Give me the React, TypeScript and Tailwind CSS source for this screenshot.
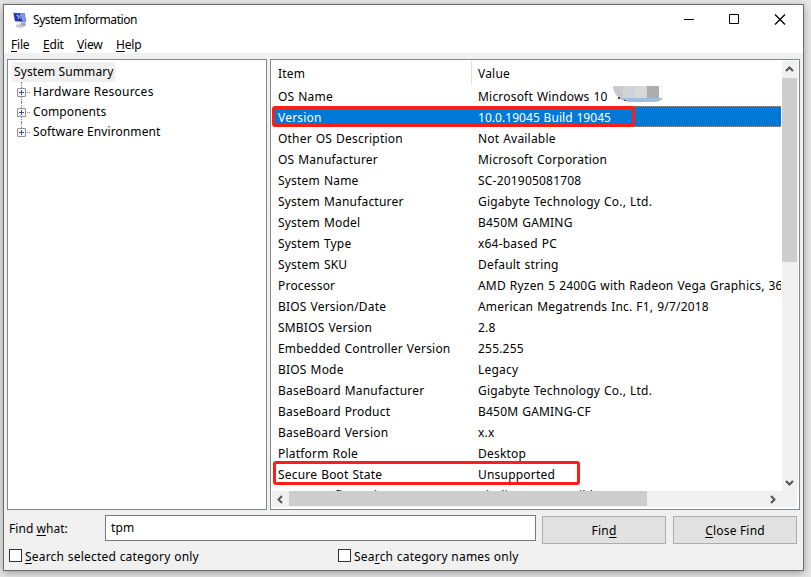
import { useState } from 'react'
import type { ReactNode } from 'react'

const rows: [string, string][] = [
  ['OS Name', 'Microsoft Windows 10'],
  ['Version', '10.0.19045 Build 19045'],
  ['Other OS Description', 'Not Available'],
  ['OS Manufacturer', 'Microsoft Corporation'],
  ['System Name', 'SC-201905081708'],
  ['System Manufacturer', 'Gigabyte Technology Co., Ltd.'],
  ['System Model', 'B450M GAMING'],
  ['System Type', 'x64-based PC'],
  ['System SKU', 'Default string'],
  ['Processor', 'AMD Ryzen 5 2400G with Radeon Vega Graphics, 36'],
  ['BIOS Version/Date', 'American Megatrends Inc. F1, 9/7/2018'],
  ['SMBIOS Version', '2.8'],
  ['Embedded Controller Version', '255.255'],
  ['BIOS Mode', 'Legacy'],
  ['BaseBoard Manufacturer', 'Gigabyte Technology Co., Ltd.'],
  ['BaseBoard Product', 'B450M GAMING-CF'],
  ['BaseBoard Version', 'x.x'],
  ['Platform Role', 'Desktop'],
  ['Secure Boot State', 'Unsupported'],
  ['PCR7 Configuration', 'Binding Not Possible'],
]

const categories = ['Hardware Resources', 'Components', 'Software Environment']

function Key({ children }: { children: ReactNode }) {
  return <span className="underline decoration-1 underline-offset-2">{children}</span>
}

function AppIcon() {
  return (
    <svg width="16" height="16" viewBox="0 0 16 16">
      <path d="M3 13l5-2 4 1 1 2-5 2-5-1z" fill="#c9ccd1" />
      <path d="M8 11l4-1 1 3-4 1z" fill="#9aa1ab" />
      <path d="M0 .5l12 .5 1.500 10L2 10z" fill="#c3cbe0" />
      <path d="M.5 1l11 .5L13 10 2 9z" fill="#2038b4" />
      <path d="M7 1.300l4.500.2L13 10 9.500 9.700z" fill="#7f97e4" />
      <path d="M3.500 3.500l1.500-.5.500 4M7.500 3l-1 2 2 1.500" stroke="#b9c8f6" fill="none" />
    </svg>
  )
}

function Chevron({ d }: { d: string }) {
  return (
    <svg width="9" height="9" viewBox="0 0 9 9" fill="none" stroke="#555" strokeWidth="2">
      <path d={d} />
    </svg>
  )
}

function TitleBar() {
  return (
    <div className="flex h-[29px] items-center bg-white pl-[9px]">
      <AppIcon />
      <span className="ml-1 flex-1 text-[12px] tracking-[-0.43px]">System Information</span>
      <svg width="130" height="11" viewBox="0 0 130 11" className="mr-[-11px]" fill="none" stroke="#000">
        <path d="M0 5.500h10M45.500 .5h9v9h-9z" />
        <path d="M91 .5l10 10M101 .5l-10 10" strokeWidth="1.300" />
      </svg>
    </div>
  )
}

function MenuBar() {
  return (
    <div className="flex h-[19px] items-center bg-white pt-[3px] pl-[7px] text-[12px] tracking-[-0.2px]">
      <span className="w-8"><Key>F</Key>ile</span>
      <span className="w-[34px]"><Key>E</Key>dit</span>
      <span className="w-[39px]"><Key>V</Key>iew</span>
      <span><Key>H</Key>elp</span>
    </div>
  )
}

function Tree() {
  return (
    <div className="w-[260px] border border-[#828790] bg-white pt-[2px] pl-1 tracking-[0.1px]">
      <div className="h-5 w-[103px] bg-[#f0f0f0] pl-[2px] leading-5">System Summary</div>
      {categories.map((name, i) => (
        <div key={name} className="relative flex h-5 items-center pl-[5px]">
          <span className="absolute top-0 left-[9px] h-[6px] border-l border-dotted border-[#808080]" />
          {i < categories.length - 1 && (
            <span className="absolute bottom-0 left-[9px] h-[5px] border-l border-dotted border-[#808080]" />
          )}
          <svg width="9" height="9" viewBox="0 0 9 9" fill="none">
            <rect x=".5" y=".5" width="8" height="8" rx=".5" fill="#f6f6f6" stroke="#919191" />
            <path d="M2 4.500h5M4.500 2v5" stroke="#3c5096" />
          </svg>
          <span className="ml-px w-[3px] border-t border-dotted border-[#808080]" />
          <span className={i === 0 ? 'ml-[3px] tracking-[0.25px]' : 'ml-[3px]'}>{name}</span>
        </div>
      ))}
    </div>
  )
}

function Details() {
  return (
    <div className="relative ml-[3px] flex w-[530px] flex-col border border-[#828790] bg-white p-px pb-[2px] [word-spacing:0.6px]">
      <div className="flex min-h-0 flex-1">
        <div className="h-[431px] w-[510px] overflow-hidden">
          <div className="flex h-6 items-center">
            <span className="h-6 w-[200px] border-r border-[#e0e0e0] pl-[6px] leading-[26px]">Item</span>
            <span className="pt-[2px] pl-[6px]">Value</span>
          </div>
          {rows.map(([item, value], i) => (
            <div
              key={item}
              className={i === 1
                ? 'ml-[2px] flex h-[21px] items-center border-y border-dotted border-[#ff8728] bg-[#0078d7] pt-[2px] pl-1 whitespace-nowrap text-white'
                : 'flex h-[21px] items-center pt-[2px] pl-[6px] whitespace-nowrap'}
            >
              <span className="w-[200px] shrink-0">{item}</span>
              <span className={i === 1 ? 'tracking-[0.05px]' : ''}>{value}</span>
              {i === 0 && (
                <svg width="51" height="18" viewBox="0 0 51 18" className="-mt-1 ml-[5px]">
                  <path d="M0 0h13v12H7Q0 8 0 0z" fill="#c9c9cc" />
                  <path d="M10 0h12v12H10z" fill="#d0d3d7" />
                  <path d="M22 0h12v12H22z" fill="#d8d8d9" />
                  <path d="M34 0h12v12H34z" fill="#adadad" />
                  <path d="M46 0h4v12h-4z" fill="#f7f9fb" />
                  <path d="M6 12h44q-3 4-9 4H17Q10 15 6 12z" fill="#a0bdd9" />
                  <path d="M5 11h2v2H5zM11 14h2v1h-2z" fill="#444" />
                </svg>
              )}
            </div>
          ))}
        </div>
        <div className="ml-px flex w-4 flex-col bg-[#f0f0f0]">
          <div className="ml-[3px] flex h-[17px] items-center"><Chevron d="M1 6l3.500-3.500L8 6" /></div>
          <div className="h-[184px] w-[15px] bg-[#cdcdcd]" />
          <div className="flex-1" />
          <div className="ml-[3px] flex h-[17px] items-center"><Chevron d="M1 3l3.500 3.500L8 3" /></div>
        </div>
      </div>
      <div className="mr-px flex h-4 items-center bg-[#f0f0f0]">
        <div className="flex w-[17px] justify-center"><Chevron d="M6 1L2.500 4.500 6 8" /></div>
        <div className="h-[15px] w-[358px] self-start bg-[#cdcdcd]" />
        <div className="flex-1" />
        <div className="mr-4 flex w-[17px] justify-center"><Chevron d="M3 1l3.500 3.500L3 8" /></div>
      </div>
      <div className="absolute top-[46px] left-px h-[21px] w-[363px] rounded-[3px] border-3 border-[#ff1e14]" />
      <div className="absolute top-[401px] left-[2px] h-6 w-[307px] rounded-[3px] border-3 border-[#ff1e14]" />
    </div>
  )
}

function Checkbox({ children }: { children: ReactNode }) {
  return (
    <label className="flex w-[329px] items-center">
      <input type="checkbox" className="mb-[3px] size-[13px] appearance-none border border-[#333] bg-white" />
      <span className="ml-[3px] [word-spacing:0.3px]">{children}</span>
    </label>
  )
}

function FindBar() {
  const [query, setQuery] = useState('tpm')

  return (
    <div className="pt-[5px] pl-[5px]">
      <div className="flex">
        <span className="w-24 leading-[27px] tracking-[0.05px]">Find <Key>w</Key>hat:</span>
        <input
          value={query}
          onChange={(e) => setQuery(e.target.value)}
          className="h-[26px] w-[431px] border border-[#7a7a7a] bg-white pb-px pl-[5px] outline-none"
        />
        <button className="mt-px ml-[6px] h-[28px] w-[124px] border border-[#adadad] bg-[#e1e1e1] pt-px">Fin<Key>d</Key></button>
        <button className="mt-px ml-[7px] h-[28px] w-[124px] border border-[#adadad] bg-[#e1e1e1] pt-px"><Key>C</Key>lose Find</button>
      </div>
      <div className="mt-[3px] flex h-5 items-center">
        <Checkbox><Key>S</Key>earch selected category only</Checkbox>
        <Checkbox>Sea<Key>r</Key>ch category names only</Checkbox>
      </div>
    </div>
  )
}

export default function App() {
  return (
    <div className="h-[577px] w-[811px] overflow-hidden bg-[#e8e8e8] pt-1 pl-[3px] font-['Noto_Sans',sans-serif] text-[12px] tracking-[0.2px] text-black">
      <div className="flex h-[567px] w-[801px] flex-col border border-[#6d6d6d] bg-[#f0f0f0] shadow-[0_2px_8px_rgba(0,0,0,0.35)]">
        <TitleBar />
        <MenuBar />
        <div className="mt-[6px] ml-[3px] flex h-[451px]">
          <Tree />
          <Details />
        </div>
        <FindBar />
      </div>
    </div>
  )
}
